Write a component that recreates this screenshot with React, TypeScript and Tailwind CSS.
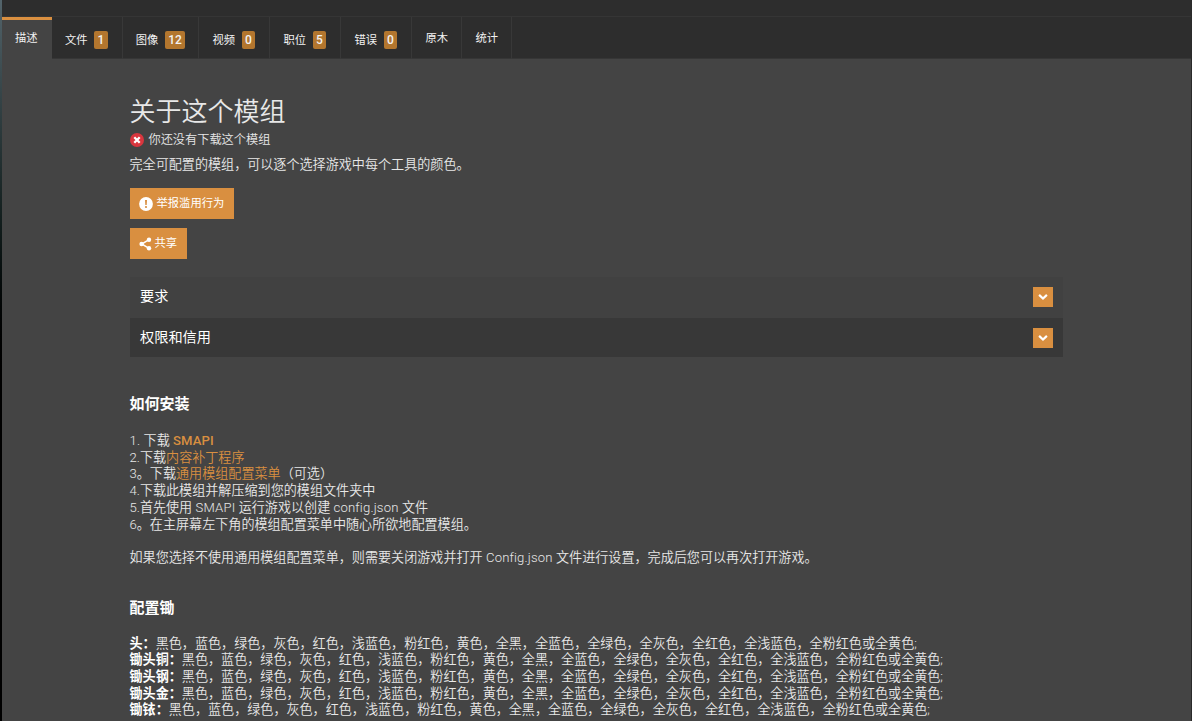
import { ReactNode } from "react";

const tabs = [
  { label: "描述", width: "w-[50px]", active: true },
  { label: "文件", width: "w-[70.8px]", count: 1 },
  { label: "图像", width: "w-[76.7px]", count: 12 },
  { label: "视频", width: "w-[71px]", count: 0 },
  { label: "职位", width: "w-[71px]", count: 5 },
  { label: "错误", width: "w-[71px]", count: 0 },
  { label: "原木", width: "w-[50px]" },
  { label: "统计", width: "w-[50px]" },
];

const colors =
  "黑色，蓝色，绿色，灰色，红色，浅蓝色，粉红色，黄色，全黑，全蓝色，全绿色，全灰色，全红色，全浅蓝色，全粉红色或全黄色;";

const hoes = ["头：", "锄头铜：", "锄头钢：", "锄头金：", "锄铱："];

const CrossIcon = () => (
  <svg viewBox="0 0 14 14" className="h-[14px] w-[14px] shrink-0">
    <circle cx="7" cy="7" r="7" fill="#d9363e" />
    <path d="M4.3 4.3l5.4 5.4M9.7 4.3l-5.4 5.4" stroke="#fff" strokeWidth="2.3" />
  </svg>
);

const AlertIcon = () => (
  <svg viewBox="0 0 14 14" className="h-[14px] w-[14px] shrink-0">
    <circle cx="7" cy="7" r="6.9" fill="#fff" />
    <path d="M6 3h2l-.3 4.9H6.3z" fill="#d98f40" />
    <circle cx="7" cy="10" r="1.1" fill="#d98f40" />
  </svg>
);

const ShareIcon = () => (
  <svg viewBox="0 0 13 14" className="h-[14px] w-[13px] shrink-0">
    <path d="M10 2.7L2.8 7l7.2 4.3" fill="none" stroke="#fff" strokeWidth="1.5" />
    <circle cx="10" cy="2.7" r="2.2" fill="#fff" />
    <circle cx="2.6" cy="7" r="2.2" fill="#fff" />
    <circle cx="10" cy="11.3" r="2.2" fill="#fff" />
  </svg>
);

const ChevronIcon = () => (
  <svg viewBox="0 0 10 8" className="h-[8px] w-[10px]">
    <path d="M1.1 1.9L5 5.5l3.9-3.6" fill="none" stroke="#fff" strokeWidth="2.2" />
  </svg>
);

const Tab = ({ label, width, count, active }: { label: string; width: string; count?: number; active?: boolean }) => {
  if (active) {
    return (
      <div className={`${width} h-[42px] border-t-[3px] border-[#d98f40] bg-[#444444] pt-[10px] pl-[13px] text-[11.3px] leading-[18px]`}>
        {label}
      </div>
    );
  }
  if (count === undefined) {
    return (
      <div className={`${width} h-[42px] border-r border-[#383838] pt-[13px] pl-[13px] text-[11.3px] leading-[18px]`}>{label}</div>
    );
  }
  return (
    <div className={`${width} flex h-[42px] items-start gap-[6.5px] border-r border-[#383838] pt-[14px] pl-[13px] text-[11.3px] leading-[18px]`}>
      <span className="pt-px">{label}</span>
      <span className="h-[18px] rounded-[2px] bg-[#b3762e] px-[3.4px] text-[12px] leading-[18px] font-medium">{count}</span>
    </div>
  );
};

const AccordionRow = ({ title, className }: { title: string; className: string }) => (
  <div className={`flex items-center justify-between px-[10.5px] text-[14.2px] text-white ${className}`}>
    <span>{title}</span>
    <button className="flex h-5 w-5 items-center justify-center bg-[#d98f40]">
      <ChevronIcon />
    </button>
  </div>
);

const Latin = ({ children }: { children: ReactNode }) => <span className="tracking-[0.17px]">{children}</span>;

const App = () => {
  return (
    <div
      lang="zh-CN"
      className="flex h-[721px] w-full overflow-hidden bg-[#444444] font-['Roboto','Noto_Sans_CJK_SC',sans-serif] whitespace-nowrap text-[#e8e8e8]"
    >
      <div className="w-[2px] shrink-0 bg-linear-to-b from-[#53646b] via-[#14201f] via-30% to-black to-55%" />
      <div className="flex grow flex-col">
        <header className="h-[59px] shrink-0 border-b border-[#363636] bg-[#2d2d2d] text-[#f2f2f2]">
          <div className="h-[17px] border-b border-[#353535]" />
          <nav className="flex">
            {tabs.map((tab) => (
              <Tab key={tab.label} {...tab} />
            ))}
          </nav>
        </header>

        <main className="ml-[127.5px] w-[933.5px] pt-[33px]">
          <h1 className="text-[26px] leading-[40px] font-[350]">关于这个模组</h1>
          <div className="flex h-[16px] items-center gap-[5px] text-[12.2px] font-[350]">
            <CrossIcon />
            <span className="pt-px">你还没有下载这个模组</span>
          </div>
          <p className="mt-[8px] text-[13.08px] leading-[18px] font-[350]">完全可配置的模组，可以逐个选择游戏中每个工具的颜色。</p>

          <button className="mt-[14px] flex h-[31px] w-[104px] items-center gap-[4px] bg-[#d98f40] pl-[9px] text-[11.3px] text-white">
            <AlertIcon />
            <span className="pt-px">举报滥用行为</span>
          </button>
          <button className="mt-[9px] flex h-[31px] w-[57px] items-center gap-[3px] bg-[#d98f40] pl-[9px] text-[11.3px] text-white">
            <ShareIcon />
            <span className="pt-px">共享</span>
          </button>

          <section className="mt-[18px]">
            <AccordionRow title="要求" className="h-[41px] bg-[#414141] pb-[2px]" />
            <AccordionRow title="权限和信用" className="h-[39px] bg-[#383838]" />
          </section>

          <section className="pt-[37px] text-[13.08px] leading-[16.7px] font-[350]">
            <h2 className="text-[15px] leading-[20px] font-bold text-white">如何安装</h2>
            <div className="mt-[19px]">
              <p>
                <Latin>1. </Latin>下载 <a className="font-medium tracking-[0.17px] text-[#d98f40]">SMAPI</a>
              </p>
              <p>
                2.下载<a className="text-[#d98f40]">内容补丁程序</a>
              </p>
              <p>
                3。下载<a className="text-[#d98f40]">通用模组配置菜单</a>（可选）
              </p>
              <p>4.下载此模组并解压缩到您的模组文件夹中</p>
              <p>
                5.首先使用<Latin> SMAPI </Latin>运行游戏以创建<Latin> config.json </Latin>文件
              </p>
              <p>6。在主屏幕左下角的模组配置菜单中随心所欲地配置模组。</p>
            </div>
            <p className="mt-[16.7px]">
              如果您选择不使用通用模组配置菜单，则需要关闭游戏并打开<Latin> Config.json </Latin>
              文件进行设置，完成后您可以再次打开游戏。
            </p>

            <h2 className="mt-[31.5px] text-[15px] leading-[20px] font-bold text-white">配置锄</h2>
            <div className="mt-[17.5px]">
              {hoes.map((hoe) => (
                <p key={hoe}>
                  <b className="font-bold text-white">{hoe}</b>
                  {colors}
                </p>
              ))}
            </div>
          </section>
        </main>
      </div>
      <div className="w-px shrink-0 bg-[#2a2a2a]" />
    </div>
  );
};

export default App;
